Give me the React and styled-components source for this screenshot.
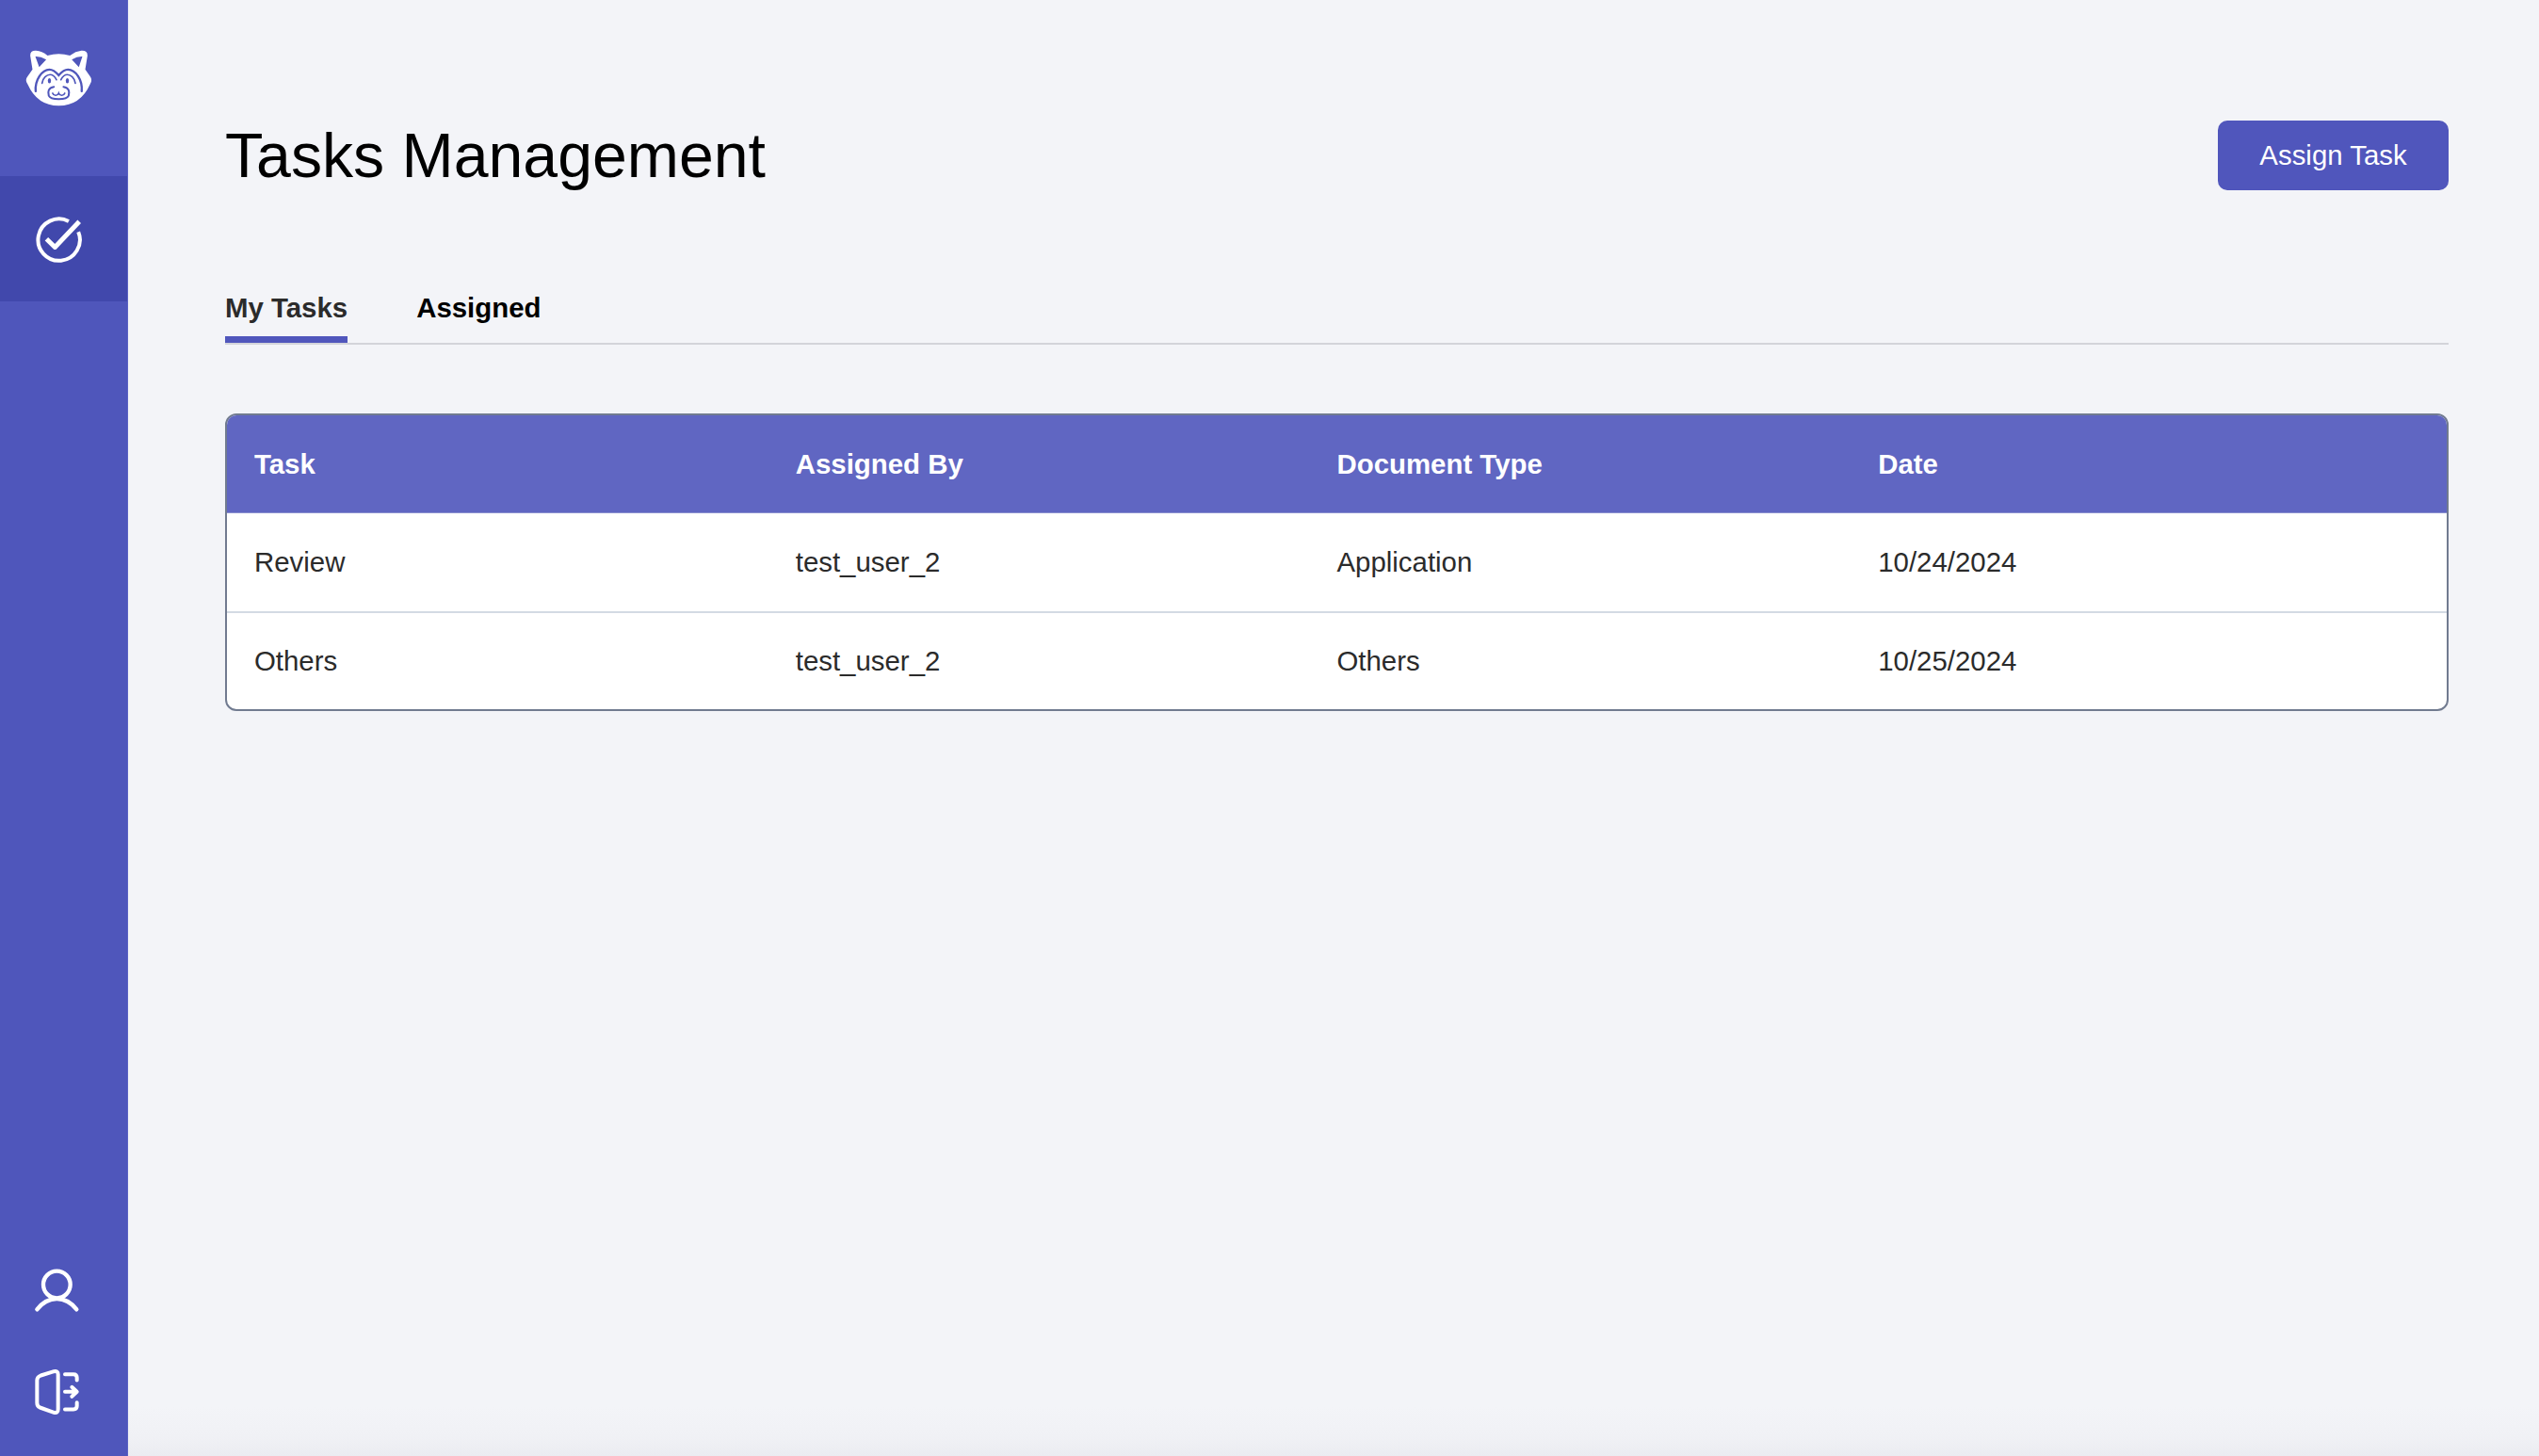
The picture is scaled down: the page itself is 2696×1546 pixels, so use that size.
import React from "react";
import styled, { createGlobalStyle } from "styled-components";

const Global = createGlobalStyle`
  html, body { margin: 0; padding: 0; height: 100%; }
  body { font-family: "Liberation Sans", Arial, sans-serif; background: #f3f4f8; }
  * { box-sizing: border-box; }
`;
const Page = styled.div`display: flex; width: 2696px; height: 1546px; overflow: hidden;`;
const Sidebar = styled.aside`
  width: 136px; flex: none; display: flex; flex-direction: column; background: #4f56bb;
  border-right: 1px solid #5c63c4;
`;
const LogoBlock = styled.div`height: 187px; padding: 51px 0 0 26px;`;
const NavItem = styled.div`
  height: 133px; display: flex; align-items: center; padding-left: 34px; background: #4148ac;
`;
const Spacer = styled.div`flex: 1;`;
const BottomNav = styled.div`display: flex; flex-direction: column; gap: 57px; padding: 0 0 42px 35px;`;
const Icon = styled.svg`display: block; fill: none; stroke: #fff; stroke-linecap: round; stroke-linejoin: round;`;
const Main = styled.main`
  flex: 1; padding: 128px 96px 0 103px;
  background: linear-gradient(to bottom, #f3f4f8 calc(100% - 52px), #f0f1f5 calc(100% - 20px), #ebecf1 100%);
`;
const Header = styled.header`display: flex; align-items: center; justify-content: space-between; height: 74px;`;
const Title = styled.h1`margin: 0; font-size: 66.2px; font-weight: 400; color: #000; line-height: 74px;`;
const AssignButton = styled.button`
  width: 245px; height: 74px; border: 0; border-radius: 10px; background: #5056bc; color: #fff;
  font: 400 29.4px "Liberation Sans", Arial, sans-serif;
`;
const Tabs = styled.nav`display: flex; gap: 73px; margin-top: 108px; border-bottom: 2px solid #d3d4da;`;
const Tab = styled.div`
  height: 54px; line-height: 34px; font-size: 29.4px; font-weight: 700;
  color: ${(p) => (p.$active ? "#2b2b2b" : "#000")};
  border-bottom: 7px solid ${(p) => (p.$active ? "#5056bc" : "transparent")};
`;
const Table = styled.section`
  margin-top: 73px; border: 2px solid #717b90; border-radius: 12px; overflow: hidden; background: #fff;
`;
const Row = styled.div`
  display: grid; grid-template-columns: repeat(4, 1fr); align-items: center; padding: 0 29px;
  font-size: 29.4px;
  height: ${(p) => p.$h}px;
  ${(p) => p.$head
    ? "background: #6066c2; color: #fff; font-weight: 700; border-bottom: 1px solid #8a90cf;"
    : "color: #2b2b2b;"}
  ${(p) => p.$divider ? "border-bottom: 2px solid #d3dae3;" : ""}
`;

const Raccoon = () => (
  <svg width="73" height="63" viewBox="80 155 215 185" style={{ display: "block" }}>
    <path fill="#fff" d="M98 178 Q98 162 116 163 Q135 165 152 178 Q187 168 222 178 Q240 165 258 163 Q277 162 277 178 L270 222 L285 243 Q294 255 285 268 Q255 335 187 335 Q120 335 90 268 Q80 255 90 243 L105 222 Z" />
    <path fill="#4f56bb" d="M114 181 Q130 180 148 191 L126 214 Z M261 181 Q245 180 228 191 L250 214 Z" />
    <g fill="none" stroke="#4f56bb" strokeLinecap="round">
      <path strokeWidth="7" d="M115 290 C112 255 135 222 158 222 C172 222 180 232 187 240 C194 232 202 222 216 222 C240 222 262 255 259 290" />
      <path strokeWidth="5" d="M135 265 C137 248 150 238 160 238 C170 238 176 246 180 254 M239 265 C237 248 224 238 214 238 C204 238 198 246 194 254" />
      <path strokeWidth="6" d="M172 276 C155 278 152 292 156 304 C162 318 212 318 218 304 C222 292 219 278 202 276" />
      <path strokeWidth="5" d="M168 296 C172 306 184 304 187 296 C190 304 202 306 206 296" />
    </g>
    <ellipse cx="158" cy="257" rx="5" ry="8" fill="#4f56bb" />
    <ellipse cx="214" cy="257" rx="5" ry="8" fill="#4f56bb" />
  </svg>
);

const CheckIcon = () => (
  <Icon width="55" height="53" viewBox="105 680 165 160" strokeWidth="12">
    <path strokeLinecap="butt" d="M222 704 A67 67 0 1 0 253 738" />
    <path strokeLinecap="butt" strokeWidth="15" d="M151 761 L178 787 L256 705" />
  </Icon>
);
const UserIcon = () => (
  <Icon width="50" height="50" viewBox="105 140 150 150" strokeWidth="13">
    <circle cx="181" cy="197" r="43" />
    <path d="M118 276 Q145 242 181 242 Q217 242 244 276" />
  </Icon>
);
const DoorIcon = () => (
  <Icon width="50" height="52" viewBox="105 460 150 155" strokeWidth="12">
    <path d="M130 485 L172 472 Q185 470 185 482 V592 Q185 606 172 603 L127 587 Q118 583 118 572 V500 Q118 490 130 485 Z" />
    <path d="M207 481 H234 Q245 481 245 492 V500 M207 593 H234 Q245 593 245 582 V571" />
    <path d="M207 537 H243 M229 522 L245 537 L229 552" />
  </Icon>
);

const head = ["Task", "Assigned By", "Document Type", "Date"];
const rows = [
  { h: 106, cells: ["Review", "test_user_2", "Application", "10/24/2024"] },
  { h: 102, cells: ["Others", "test_user_2", "Others", "10/25/2024"] },
];

export default function App() {
  return (
    <Page>
      <Global />
      <Sidebar>
        <LogoBlock><Raccoon /></LogoBlock>
        <NavItem><CheckIcon /></NavItem>
        <Spacer />
        <BottomNav><UserIcon /><DoorIcon /></BottomNav>
      </Sidebar>
      <Main>
        <Header>
          <Title>Tasks Management</Title>
          <AssignButton>Assign Task</AssignButton>
        </Header>
        <Tabs>
          <Tab $active>My Tasks</Tab>
          <Tab>Assigned</Tab>
        </Tabs>
        <Table>
          <Row $head $h={104}>{head.map((h) => <div key={h}>{h}</div>)}</Row>
          {rows.map((r, i) => (
            <Row key={i} $h={r.h} $divider={i === 0}>{r.cells.map((c, j) => <div key={j}>{c}</div>)}</Row>
          ))}
        </Table>
      </Main>
    </Page>
  );
}
